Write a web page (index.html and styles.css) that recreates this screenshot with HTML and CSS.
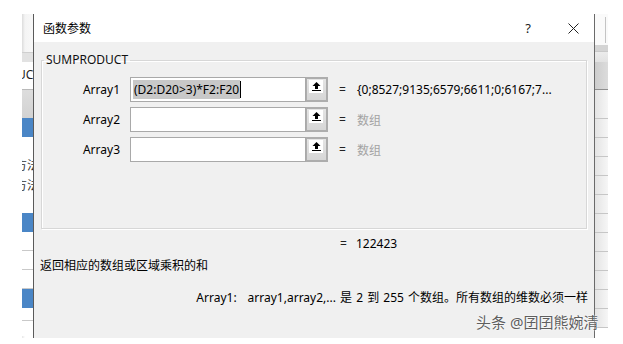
FILE: index.html
```html
<!DOCTYPE html>
<html lang="zh-CN">
<head>
<meta charset="utf-8">
<title>函数参数</title>
<link rel="stylesheet" href="styles.css">
</head>
<body>
<div class="stage">
  <div class="sheet-left">
    <div class="lc lc-top"></div>
    <div class="lc lc-band"></div>
    <div class="lc lc-text"><span>UCT</span></div>
    <div class="lc lc-gray"></div>
    <div class="lc lc-blue"></div>
    <div class="lc lc-rows"><span>方法</span><span>方法</span></div>
    <div class="lc lc-blue"></div>
    <div class="lc lc-row"></div>
    <div class="lc lc-row"></div>
    <div class="lc lc-row"></div>
    <div class="lc lc-blue"></div>
    <div class="lc lc-row2"></div>
    <div class="lc lc-end"></div>
  </div>

  <div class="dialog">
    <div class="titlebar">
      <span class="title">函数参数</span>
      <span class="help">?</span>
      <svg class="close" width="11" height="11" viewBox="0 0 11 11"><path d="M0.5 0.5 L10.5 10.5 M10.5 0.5 L0.5 10.5" stroke="#222" stroke-width="1" fill="none"/></svg>
    </div>
    <div class="body">
      <fieldset class="group">
        <legend>SUMPRODUCT</legend>
        <div class="args">
          <div class="arg">
            <span class="lbl">Array1</span>
            <div class="input"><span class="sel">(D2:D20&gt;3)*F2:F20</span><span class="caret"></span></div>
            <span class="ref"><span class="ico"><svg width="9" height="9" viewBox="0 0 9 9"><path d="M4.5 0 L8.5 4 H6 V7 H3 V4 H0.5 Z" fill="#000"/><rect x="0" y="8" width="9" height="1" fill="#000"/></svg></span></span>
            <span class="eq">=</span>
            <span class="val">{0;8527;9135;6579;6611;0;6167;7...</span>
          </div>
          <div class="arg">
            <span class="lbl">Array2</span>
            <div class="input"></div>
            <span class="ref"><span class="ico"><svg width="9" height="9" viewBox="0 0 9 9"><path d="M4.5 0 L8.5 4 H6 V7 H3 V4 H0.5 Z" fill="#000"/><rect x="0" y="8" width="9" height="1" fill="#000"/></svg></span></span>
            <span class="eq">=</span>
            <span class="val hint">数组</span>
          </div>
          <div class="arg">
            <span class="lbl">Array3</span>
            <div class="input"></div>
            <span class="ref"><span class="ico"><svg width="9" height="9" viewBox="0 0 9 9"><path d="M4.5 0 L8.5 4 H6 V7 H3 V4 H0.5 Z" fill="#000"/><rect x="0" y="8" width="9" height="1" fill="#000"/></svg></span></span>
            <span class="eq">=</span>
            <span class="val hint">数组</span>
          </div>
        </div>
      </fieldset>
      <div class="result"><span class="eq2">=</span><span>122423</span></div>
      <div class="desc">返回相应的数组或区域乘积的和</div>
      <div class="argdesc"><span class="argname">Array1:</span>array1,array2,... 是 2 到 255 个数组。所有数组的维数必须一样</div>
    </div>
  </div>

  <div class="sheet-right">
    <div class="rc rc-top"><span class="sb"></span></div>
    <div class="rc rc-h1"></div>
    <div class="rc rc-h2"></div>
    <div class="rc rc-h3"></div>
    <div class="rc rc-r0"></div>
    <div class="rc rc-r"></div>
    <div class="rc rc-r"></div>
    <div class="rc rc-r"></div>
    <div class="rc rc-r"></div>
    <div class="rc rc-r"></div>
    <div class="rc rc-r"></div>
    <div class="rc rc-r"></div>
    <div class="rc rc-r"></div>
    <div class="rc rc-r"></div>
    <div class="rc rc-r"></div>
    <div class="rc rc-r"></div>
  </div>
</div>
<div class="watermark">头条 @囝囝熊婉清</div>
</body>
</html>
```

FILE: styles.css
```css
* { box-sizing: border-box; }

html, body {
  margin: 0;
  background: #ffffff;
}

body {
  width: 623px;
  height: 344px;
  overflow: hidden;
  position: relative;
  font-family: "Noto Sans", "Noto Sans CJK SC", sans-serif;
  font-size: 12px;
  color: #000;
}

.stage {
  display: flex;
  padding: 14px 0 0 22px;
  height: 338px;
}

/* ---------- spreadsheet strips behind the dialog ---------- */
.sheet-left {
  width: 11px;
  display: flex;
  flex-direction: column;
  overflow: hidden;
  background: linear-gradient(to right, #e6e6e6 0, #ffffff 3px);
}

.lc { flex: none; width: 100%; overflow: hidden; white-space: nowrap; }
.lc-top { height: 38px; background: linear-gradient(to right, #dcdcdc 0, #f4f4f4 3px, #f8f8f8 100%); }
.lc-band { height: 10px; background: #e2e2e2; border-top: 1px solid #cfcfcf; }
.lc-text { height: 27px; background: #fff; line-height: 25px; font-size: 12px; color: #222; }
.lc-text span { display: block; margin-left: -5px; }
.lc-gray { height: 29px; border-top: 1px solid #b9b9b9; background: linear-gradient(#dddddd, #d2d2d2); }
.lc-blue { height: 19px; background: #4a86c6; }
.lc-rows {
  height: 76px;
  background: #fff;
  padding-top: 19px;
  display: flex;
  flex-direction: column;
  color: #333;
  line-height: 20px;
}
.lc-rows span { display: block; margin-left: -7px; }
.lc-row { height: 19px; background: #fff; border-bottom: 1px solid #c9c9c9; }
.lc-row2 { height: 13px; background: #fff; border-bottom: 1px solid #c9c9c9; }
.lc-end { height: 15px; background: #fff; }

.sheet-right {
  width: 13px;
  display: flex;
  flex-direction: column;
  overflow: hidden;
}
.rc { flex: none; width: 100%; }
.rc-top { height: 31px; background: #fafafa; padding: 3px 0 0 10px; }
.rc-top .sb { display: block; width: 1px; height: 26px; background: #c4c4c4; }
.rc-h1 { height: 6px; background: #d4d4d4; }
.rc-h2 { height: 11px; background: linear-gradient(#ececec, #e2e2e2); border-top: 1px solid #c9c9c9; }
.rc-h3 { height: 28px; background: linear-gradient(to right, #cdcdcd, #dcdcdc); border-bottom: 1px solid #8f8f8f; }
.rc-r0 { height: 29px; background: linear-gradient(to right, #e4e4e4, #f6f6f6); border-bottom: 1px solid #c6c6c6; }
.rc-r { height: 19px; background: linear-gradient(to right, #e4e4e4, #f6f6f6); border-bottom: 1px solid #c6c6c6; }

/* ---------- dialog ---------- */
.dialog {
  width: 562px;
  height: 324px;
  border-left: 1px solid #5a5a5a;
  border-right: 1px solid #6a6a6a;
  background: #f0f0f0;
  display: flex;
  flex-direction: column;
}

.titlebar {
  height: 28px;
  flex: none;
  background: #ffffff;
  display: flex;
  align-items: center;
  padding-left: 9px;
  padding-right: 15px;
}
.title { flex: 1; font-size: 12px; color: #000; }
.help { font-size: 13px; color: #222; margin-right: 37px; }
.close { display: block; }

.body { flex: 1; }

.group {
  margin: 10px 7px 0;
  padding: 9px 0 0 0;
  height: 177px;
  border: 1px solid #d7d7d7;
  box-shadow: inset 1px 1px 0 #ffffff, 1px 1px 0 #ffffff;
  min-width: 0;
}
.group legend {
  padding: 0 2px;
  margin-left: 2px;
  line-height: 16px;
  font-size: 12px;
  color: #111;
}

.args { display: flex; flex-direction: column; gap: 5px; }
.arg { display: flex; align-items: center; height: 25px; }
.lbl { width: 78px; text-align: right; margin-right: 10px; color: #000; }

.input {
  width: 176px;
  height: 25px;
  border: 1px solid #a9a9a9;
  background: #ffffff;
  display: flex;
  align-items: center;
  padding-left: 2px;
}
.sel { background: #c8c8c8; line-height: 19px; padding: 0 1px; color: #000; }
.caret { width: 1px; height: 17px; background: #000; }

.ref {
  width: 22px;
  height: 25px;
  border: 2px solid #adadad;
  border-left-width: 1px;
  background: linear-gradient(#e4e4e4, #d6d6d6);
  padding: 1px 0 0 2px;
}
.ico {
  display: flex;
  justify-content: center;
  align-items: flex-start;
  width: 14px;
  height: 13px;
  background: #ffffff;
  padding-top: 2px;
}
.ico svg { display: block; }

.eq { width: 7px; margin-left: 11px; margin-right: 11px; color: #222; }
.val { color: #000; white-space: nowrap; }
.hint { color: #a3a3a3; }

.result {
  margin-top: 7px;
  line-height: 16px;
  padding-left: 306px;
  display: flex;
}
.eq2 { width: 7px; margin-right: 9px; color: #222; }

.desc {
  margin-top: 6px;
  line-height: 16px;
  padding-left: 6px;
}

.argdesc {
  margin-top: 16px;
  line-height: 16px;
  text-align: right;
  padding-right: 6px;
  white-space: nowrap;
  word-spacing: 1px;
}
.argname { margin-right: 11px; }

/* ---------- watermark overlay ---------- */
.watermark {
  position: absolute;
  left: 476px;
  top: 312px;
  font-size: 15px;
  line-height: 20px;
  color: #5e5e5e;
  text-shadow: 0 0 2px #ffffff, 0 0 1px #ffffff;
  white-space: nowrap;
}
```
